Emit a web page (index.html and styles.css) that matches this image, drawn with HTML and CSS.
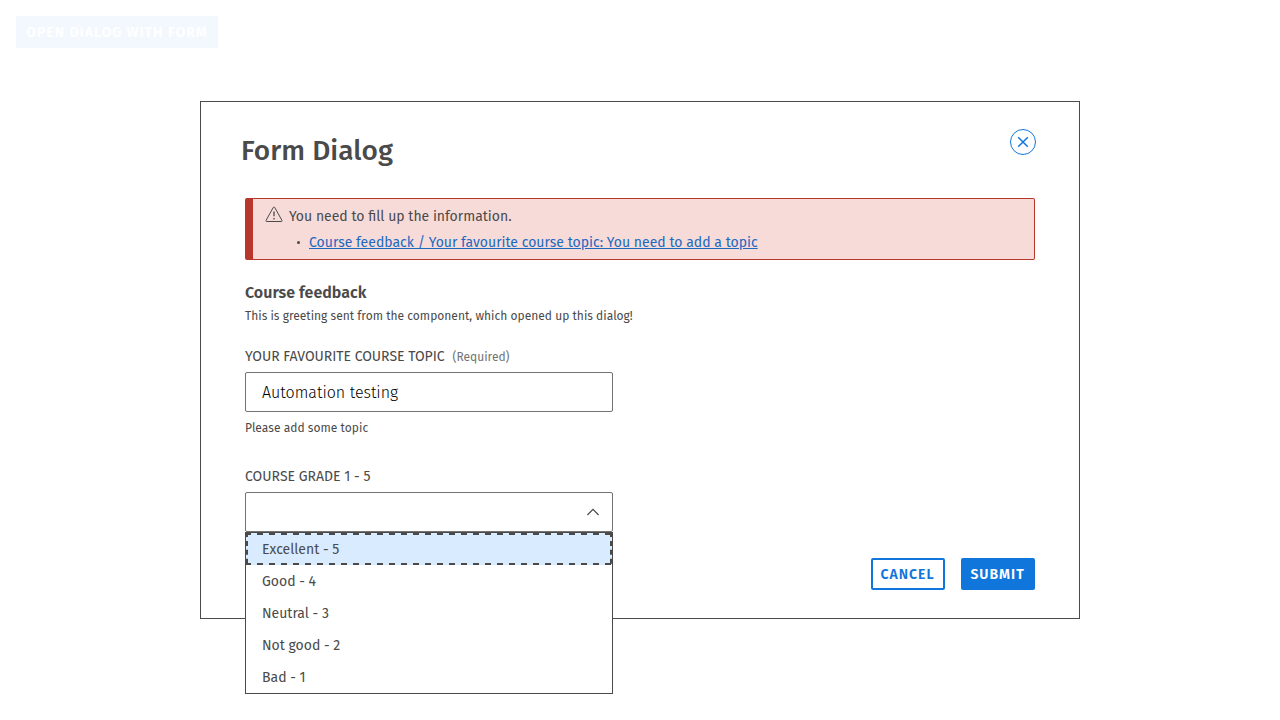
FILE: index.html
```html
<!DOCTYPE html>
<html lang="en">
<head>
<meta charset="utf-8">
<title>Form Dialog</title>
<link rel="stylesheet" href="styles.css">
</head>
<body>
<button class="open-button"><span>OPEN DIALOG WITH FORM</span></button>
<main class="dialog" role="dialog" aria-labelledby="dialog-title">
  <header class="dialog-header">
    <h1 class="dialog-title" id="dialog-title">Form Dialog</h1>
    <button class="close-button" aria-label="Close">
      <svg width="26" height="26" viewBox="0 0 26 26" fill="none" stroke="#1176dc"><circle cx="13" cy="13" r="12.5"/><path d="M8.2 8.2l9.6 9.6M17.8 8.2l-9.6 9.6" stroke-width="1.5"/></svg>
    </button>
  </header>
  <section class="alert">
    <svg class="alert-icon" width="18" height="17" viewBox="0 0 18 17" fill="none" stroke="#4a4a4a"><path d="M8.3 1.4Q9 .3 9.7 1.4L17 14.5Q17.3 15.5 16.4 15.5H1.6Q.7 15.5 1 14.5Z"/><path d="M9 5.6v4.6M9 12v1.4" stroke-width="1.3"/></svg>
    <div class="alert-body">
      <p class="alert-message">You need to fill up the information.</p>
      <ul class="alert-list"><li><a class="alert-link" href="#topic">Course feedback / Your favourite course topic: You need to add a topic</a></li></ul>
    </div>
  </section>
  <h2 class="section-title">Course feedback</h2>
  <p class="greeting">This is greeting sent from the component, which opened up this dialog!</p>
  <label class="field-label topic-label" for="topic">YOUR FAVOURITE COURSE TOPIC<span class="required">(Required)</span></label>
  <input class="text-input" id="topic" value="Automation testing">
  <p class="hint">Please add some topic</p>
  <div class="field-label grade-label">COURSE GRADE 1 - 5</div>
  <div class="select">
    <svg width="14" height="8" viewBox="0 0 14 8" fill="none" stroke="#4a4a4a" stroke-width="1.2"><path d="M1.4 7L7 1.4 12.6 7"/></svg>
    <ul class="options">
      <li class="option focused">Excellent - 5
        <svg class="focus-ring" width="366" height="32" viewBox="0 0 366 32" fill="none" stroke="#4a4a4a" stroke-width="2"><path d="M0 1H366M0 31H366" stroke-dasharray="6 6" stroke-dashoffset="1"/><path d="M1 0V32M365 0V32" stroke-dasharray="5 3.9" stroke-dashoffset="1"/></svg>
      </li>
      <li class="option">Good - 4</li>
      <li class="option">Neutral - 3</li>
      <li class="option">Not good - 2</li>
      <li class="option">Bad - 1</li>
    </ul>
  </div>
  <footer class="actions">
    <button class="button cancel">CANCEL</button>
    <button class="button submit">SUBMIT</button>
  </footer>
</main>
</body>
</html>
```
FILE: styles.css
```css
* { box-sizing: border-box; margin: 0; padding: 0; }
body { width: 1280px; height: 720px; padding: 16px; overflow: hidden; background: #fff; color: #4a4a4a; font-family: "Fira Sans", "Noto Sans", sans-serif; }
button { font-family: inherit; border: 0; background: none; }
ul { list-style: none; }
.open-button { display: block; width: 202px; height: 32px; border-radius: 2px; background: #f3f8fe; color: #fff; font-size: 14px; font-weight: 600; letter-spacing: 1.02px; line-height: 32px; padding-top: 1px; white-space: nowrap; }
.dialog { display: flex; flex-direction: column; width: 880px; height: 518px; margin: 53px auto 0; padding: 27px 44px 28px; border: 1px solid #4a4a4a; background: #fff; white-space: nowrap; }
.dialog-header { display: flex; justify-content: space-between; height: 69px; margin: 0 -1px 0 -4px; }
.dialog-title { font-size: 28px; font-weight: 500; line-height: 44px; letter-spacing: .05px; }
.close-button { width: 26px; height: 26px; }
.close-button svg { display: block; }
.alert { display: flex; width: 790px; height: 62px; border: 1px solid #b8372c; border-left-width: 8px; border-radius: 2px; background: #f7dbd9; padding: 7px 0 0 11px; font-size: 14px; }
.alert-icon { margin-left: .5px; }
.alert-body { margin-left: 6.5px; }
.alert-message { line-height: 22px; }
.alert-list { margin-top: 4px; }
.alert-list li { display: flex; align-items: center; height: 20px; padding-left: 8px; }
.alert-list li::before { content: ""; width: 3px; height: 3px; border-radius: 50%; background: #4a4a4a; margin-right: 9px; }
.alert-link { color: #1c69bf; text-decoration: underline; letter-spacing: .014px; }
.section-title { margin-top: 21px; font-size: 16px; line-height: 24px; font-weight: 600; letter-spacing: .03px; }
.greeting { margin-top: 2px; font-size: 12px; line-height: 18px; letter-spacing: .014px; }
.field-label { font-size: 14px; line-height: 20px; }
.topic-label { margin-top: 22px; letter-spacing: -.03px; }
.required { margin-left: 8px; color: #737373; font-size: 12px; letter-spacing: 0; }
.text-input { width: 368px; height: 40px; margin-top: 5px; padding: 0 16px; border: 1px solid #737373; border-radius: 2px; color: #000; font: 300 16px "Fira Sans", "Noto Sans", sans-serif; outline: 0; flex: none; }
.hint { margin-top: 7px; font-size: 12px; line-height: 18px; letter-spacing: .03px; }
.grade-label { margin-top: 30px; }
.select { position: relative; display: flex; align-items: center; justify-content: flex-end; flex: none; width: 368px; height: 40px; margin-top: 5px; padding-right: 12px; border: 1px solid #737373; border-radius: 2px; }
.options { position: absolute; left: -1px; top: 39px; width: 368px; height: 162px; border: 1px solid #4a4a4a; background: #fff; }
.option { position: relative; height: 32px; padding: 1px 0 0 16px; font-size: 14px; line-height: 32px; }
.focused { background: #d9ebfe; }
.focus-ring { position: absolute; left: 0; top: 0; }
.actions { display: flex; justify-content: flex-end; gap: 16px; margin-top: auto; height: 32px; flex: none; }
.button { width: 74px; height: 32px; border: 2px solid #1176dc; border-radius: 2px; font-size: 14px; font-weight: 600; letter-spacing: 1px; line-height: 28px; padding: 1px 1px 0 0; }
.cancel { color: #1176dc; }
.submit { background: #1176dc; color: #fff; }
```
